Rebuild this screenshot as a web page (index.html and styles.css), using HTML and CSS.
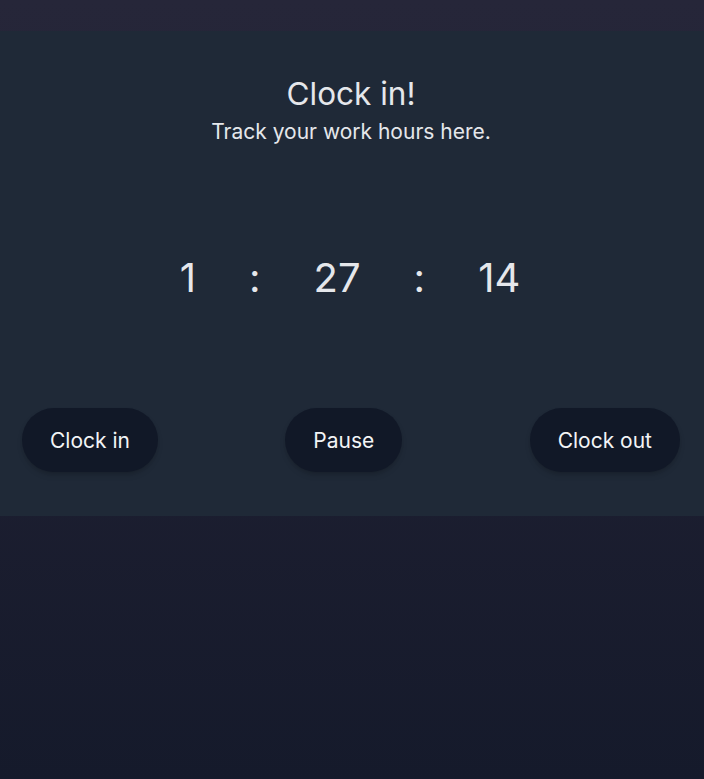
FILE: index.html
```html
<!DOCTYPE html>
<html lang="en">
<head>
<meta charset="utf-8">
<title>Clock in</title>
<link rel="stylesheet" href="styles.css">
</head>
<body>
<main class="page">
  <section class="panel">
    <header class="heading">
      <h1 class="title">Clock in!</h1>
      <p class="subtitle">Track your work hours here.</p>
    </header>
    <div class="timer">
      <span class="unit">1</span>
      <span class="sep">:</span>
      <span class="unit">27</span>
      <span class="sep">:</span>
      <span class="unit">14</span>
    </div>
    <div class="actions">
      <button class="btn">Clock in</button>
      <button class="btn">Pause</button>
      <button class="btn">Clock out</button>
    </div>
  </section>
</main>
</body>
</html>
```

FILE: styles.css
```css
* { box-sizing: border-box; }
html, body { margin: 0; padding: 0; }
body {
  min-height: 779px;
  font-family: Inter, "Noto Sans", sans-serif;
  color: #e5e7eb;
  background: linear-gradient(180deg, #262639 0%, #222437 30%, #1c1e30 60%, #151a2b 100%);
}
.page {
  padding-top: 31px;
}
.panel {
  background: #1f2937;
  padding: 45px 24px 44px 22px;
  display: flex;
  flex-direction: column;
}
.heading {
  display: flex;
  flex-direction: column;
  align-items: center;
  gap: 6px;
}
.title {
  margin: 0;
  font-size: 31.5px;
  line-height: 36px;
  font-weight: 400;
  color: #e5e7eb;
}
.subtitle {
  margin: 0;
  font-size: 21px;
  line-height: 28px;
  color: #e5e7eb;
}
.timer {
  margin-top: 112px;
  display: flex;
  justify-content: center;
  align-items: center;
  gap: 53px;
  font-size: 40px;
  line-height: 40px;
  color: #e5e7eb;
  padding-right: 2px;
}
.actions {
  margin-top: 110px;
  display: flex;
  justify-content: space-between;
  align-items: center;
}
.btn {
  height: 64px;
  padding: 0 28px;
  border: none;
  border-radius: 9999px;
  background: #111827;
  color: #f3f4f6;
  font-family: Inter, "Noto Sans", sans-serif;
  font-size: 21px;
  box-shadow: 0 4px 6px -1px rgba(0,0,0,0.15), 0 2px 4px -2px rgba(0,0,0,0.15);
}
```
